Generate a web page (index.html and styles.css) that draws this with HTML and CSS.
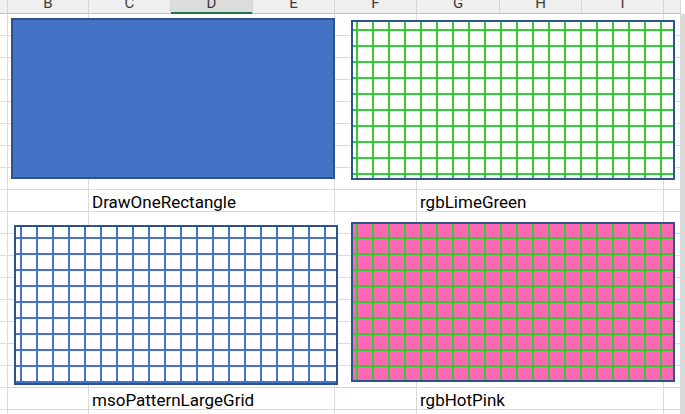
FILE: index.html
```html
<!DOCTYPE html>
<html lang="en">
  <head>
    <meta charset="utf-8">
    <title>Shapes sheet</title>
    <link rel="stylesheet" href="styles.css">
  </head>
  <body>
    <div class="sheet">
        <!-- column headers, cut off at the top -->
        <div class="ch"></div>
        <div class="ch"><span>B</span></div>
        <div class="ch"><span>C</span></div>
        <div class="ch selected"><span>D</span></div>
        <div class="ch"><span>E</span></div>
        <div class="ch"><span>F</span></div>
        <div class="ch"><span>G</span></div>
        <div class="ch"><span>H</span></div>
        <div class="ch"><span>I</span></div>
        <div class="ch"></div>

        <!-- one strip per column for the vertical gridlines -->
        <div class="col"></div>
        <div class="col"></div>
        <div class="col"></div>
        <div class="col"></div>
        <div class="col"></div>
        <div class="col"></div>
        <div class="col"></div>
        <div class="col"></div>
        <div class="col"></div>
        <div class="col"></div>

        <div class="label row-a col-c">DrawOneRectangle</div>
        <div class="label row-a col-g">rgbLimeGreen</div>
        <div class="label row-b col-c">msoPatternLargeGrid</div>
        <div class="label row-b col-g">rgbHotPink</div>

        <div class="shape solid"></div>
        <div class="shape grid green"></div>
        <div class="shape grid blue"></div>
        <div class="shape grid pink"></div>
    </div>
  </body>
</html>
```

FILE: styles.css
```css
html, body {
    margin: 0;
    height: 414px;
    overflow: hidden;
    background: #fff;
}
.sheet {
    position: relative;
    display: grid;
    grid-template-columns: 8px 81px 82px 82px 82px 82px 83px 82px 82px 1fr;
    grid-template-rows: 14px repeat(19, 22px);
    background-image: repeating-linear-gradient(to bottom, transparent 0 21px, #dadada 21px 22px);
    background-position: 0 14px;
    font-family: Roboto, "Noto Sans", sans-serif;
}
.ch {
    grid-row: 1;
    display: flex;
    justify-content: center;
    align-items: flex-end;
    overflow: hidden;
    padding-bottom: 2px;
    box-sizing: border-box;
    background: #efefef;
    border-right: 1px solid #d6d6d6;
    border-bottom: 1px solid #bdbdbd;
    color: #3c3c3c;
    font-size: 15px;
    line-height: 15px;
}
.ch.selected {
    background: #dcdcdc;
    border-bottom-color: #217346;
    box-shadow: inset 0 -1px #217346;
}
.col {
    grid-row: 2 / -1;
    border-right: 1px solid #dadada;
}
.label {
    height: 21px;
    margin-right: 1px;
    padding-left: 3px;
    display: flex;
    align-items: flex-end;
    background: #fff;
    color: #000;
    font-size: 17px;
    line-height: 17px;
    white-space: nowrap;
}
.row-a { grid-row: 10; }
.row-b { grid-row: 19; }
.col-c { grid-column: 3 / 5; }
.col-g { grid-column: 7 / 9; }

/* drawn shapes float over the cells */
.shape {
    position: absolute;
    width: 324px;
    height: 160px;
    box-sizing: border-box;
    border: 2px solid #2f528f;
}
.solid {
    left: 11px;
    top: 18px;
    height: 161px;
    background: #4472c4;
}
.grid {
    --line: #32cd32;
    background-color: #fff;
    background-image:
        linear-gradient(to right, var(--line) 2px, transparent 2px),
        linear-gradient(to bottom, var(--line) 2px, transparent 2px);
    background-size: 16px 16px;
}
.green {
    left: 351px;
    top: 20px;
    background-position: 3px 7px;
}
.blue {
    --line: #4472c4;
    left: 14px;
    top: 225px;
    background-position: 4px 10px;
}
.pink {
    left: 351px;
    top: 222px;
    background-color: #ff69b4;
    background-position: 3px 13px;
}
```
